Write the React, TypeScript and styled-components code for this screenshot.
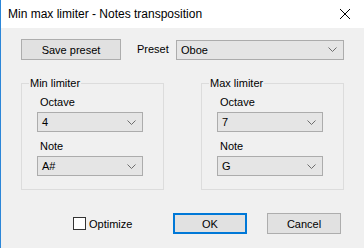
import React, { useState } from 'react';
import styled, { createGlobalStyle } from 'styled-components';

const GlobalStyle = createGlobalStyle`
  html, body {
    margin: 0;
    padding: 0;
    background: #f0f0f0;
  }
  body {
    font-family: "Liberation Sans", Arial, sans-serif;
    font-size: 11px;
    color: #000;
  }
`;

const Window = styled.div`
  width: 364px;
  height: 248px;
  box-sizing: border-box;
  border-left: 1px solid #2b86d8;
  background: #f0f0f0;
  display: flex;
  flex-direction: column;
  overflow: hidden;
`;

const TitleBar = styled.div`
  height: 28px;
  flex: none;
  background: #fff;
  display: flex;
  align-items: center;
  justify-content: space-between;
  padding: 0 14px 0 7px;
  font-size: 12px;
`;

const CloseIcon = styled.svg`
  width: 10px;
  height: 10px;
  display: block;
`;

const Body = styled.div`
  padding: 11px 20px 0 20px;
  display: flex;
  flex-direction: column;
`;

const TopRow = styled.div`
  display: flex;
  align-items: center;
  height: 21px;
`;

const Button = styled.button<{ $width: number; $primary?: boolean }>`
  width: ${p => p.$width}px;
  height: 21px;
  box-sizing: border-box;
  background: #e1e1e1;
  border: ${p => (p.$primary ? '2px solid #0078d7' : '1px solid #adadad')};
  font-family: inherit;
  font-size: 11px;
  color: #000;
  padding: 0;
  cursor: pointer;
`;

const PresetLabel = styled.span`
  box-sizing: border-box;
  width: 55px;
  padding-left: 16px;
  line-height: 15px;
`;

const SelectBox = styled.div<{ $width?: number }>`
  position: relative;
  height: 20px;
  box-sizing: border-box;
  width: ${p => (p.$width ? `${p.$width}px` : 'auto')};
  flex: ${p => (p.$width ? 'none' : '1')};
  background: #e5e5e5;
  border: 1px solid #acacac;
  display: flex;
  align-items: center;
  justify-content: space-between;
  padding: 0 6px 0 4px;
`;

const Chevron = styled.svg`
  width: 9px;
  height: 5px;
  display: block;
`;

const Groups = styled.div`
  display: grid;
  grid-template-columns: 143px 143px;
  column-gap: 37px;
  margin-top: 16px;
`;

const Group = styled.fieldset`
  margin: 0;
  border: 1px solid #dcdcdc;
  padding: 4px 19px 13px 15px;
  height: 114px;
  box-sizing: border-box;
  display: flex;
  flex-direction: column;
`;

const Legend = styled.legend`
  margin-left: -8px;
  padding: 0 1px;
  line-height: 15px;
`;

const FieldLabel = styled.div<{ $gap: number }>`
  line-height: 15px;
  margin-top: ${p => p.$gap}px;
  margin-bottom: 2px;
  padding-left: 3px;
`;

const BottomRow = styled.div`
  display: flex;
  align-items: center;
  margin-top: 23px;
  padding-left: 52px;
`;

const CheckLabel = styled.label`
  width: 100px;
  display: flex;
  align-items: center;
  gap: 3px;
  cursor: pointer;
`;

const CheckBox = styled.span`
  width: 13px;
  height: 13px;
  box-sizing: border-box;
  border: 1px solid #333;
  background: #fff;
  display: flex;
  align-items: center;
  justify-content: center;
  font-size: 10px;
  line-height: 1;
`;

const ButtonGap = styled.div`
  width: 20px;
`;

const Select: React.FC<{ value: string; width?: number }> = ({ value, width }) => (
  <SelectBox $width={width}>
    <span>{value}</span>
    <Chevron viewBox="0 0 9 5">
      <polyline points="0.5,0.5 4.5,4.5 8.5,0.5" fill="none" stroke="#6d6d6d" strokeWidth="1" />
    </Chevron>
  </SelectBox>
);

const LimiterGroup: React.FC<{ title: string; octave: string; note: string }> = ({ title, octave, note }) => (
  <Group>
    <Legend>{title}</Legend>
    <FieldLabel $gap={0}>Octave</FieldLabel>
    <Select value={octave} width={106} />
    <FieldLabel $gap={7}>Note</FieldLabel>
    <Select value={note} width={106} />
  </Group>
);

export default function App() {
  const [optimize, setOptimize] = useState(false);

  return (
    <>
      <GlobalStyle />
      <Window>
        <TitleBar>
          <span>Min max limiter - Notes transposition</span>
          <CloseIcon viewBox="0 0 10 10">
            <path d="M0 0L10 10M10 0L0 10" stroke="#000" strokeWidth="1" />
          </CloseIcon>
        </TitleBar>
        <Body>
          <TopRow>
            <Button $width={100}>Save preset</Button>
            <PresetLabel>Preset</PresetLabel>
            <Select value="Oboe" />
          </TopRow>
          <Groups>
            <LimiterGroup title="Min limiter" octave="4" note="A#" />
            <LimiterGroup title="Max limiter" octave="7" note="G" />
          </Groups>
          <BottomRow>
            <CheckLabel onClick={() => setOptimize(!optimize)}>
              <CheckBox>{optimize ? '✓' : ''}</CheckBox>
              Optimize
            </CheckLabel>
            <Button $width={74} $primary>OK</Button>
            <ButtonGap />
            <Button $width={74}>Cancel</Button>
          </BottomRow>
        </Body>
      </Window>
    </>
  );
}
